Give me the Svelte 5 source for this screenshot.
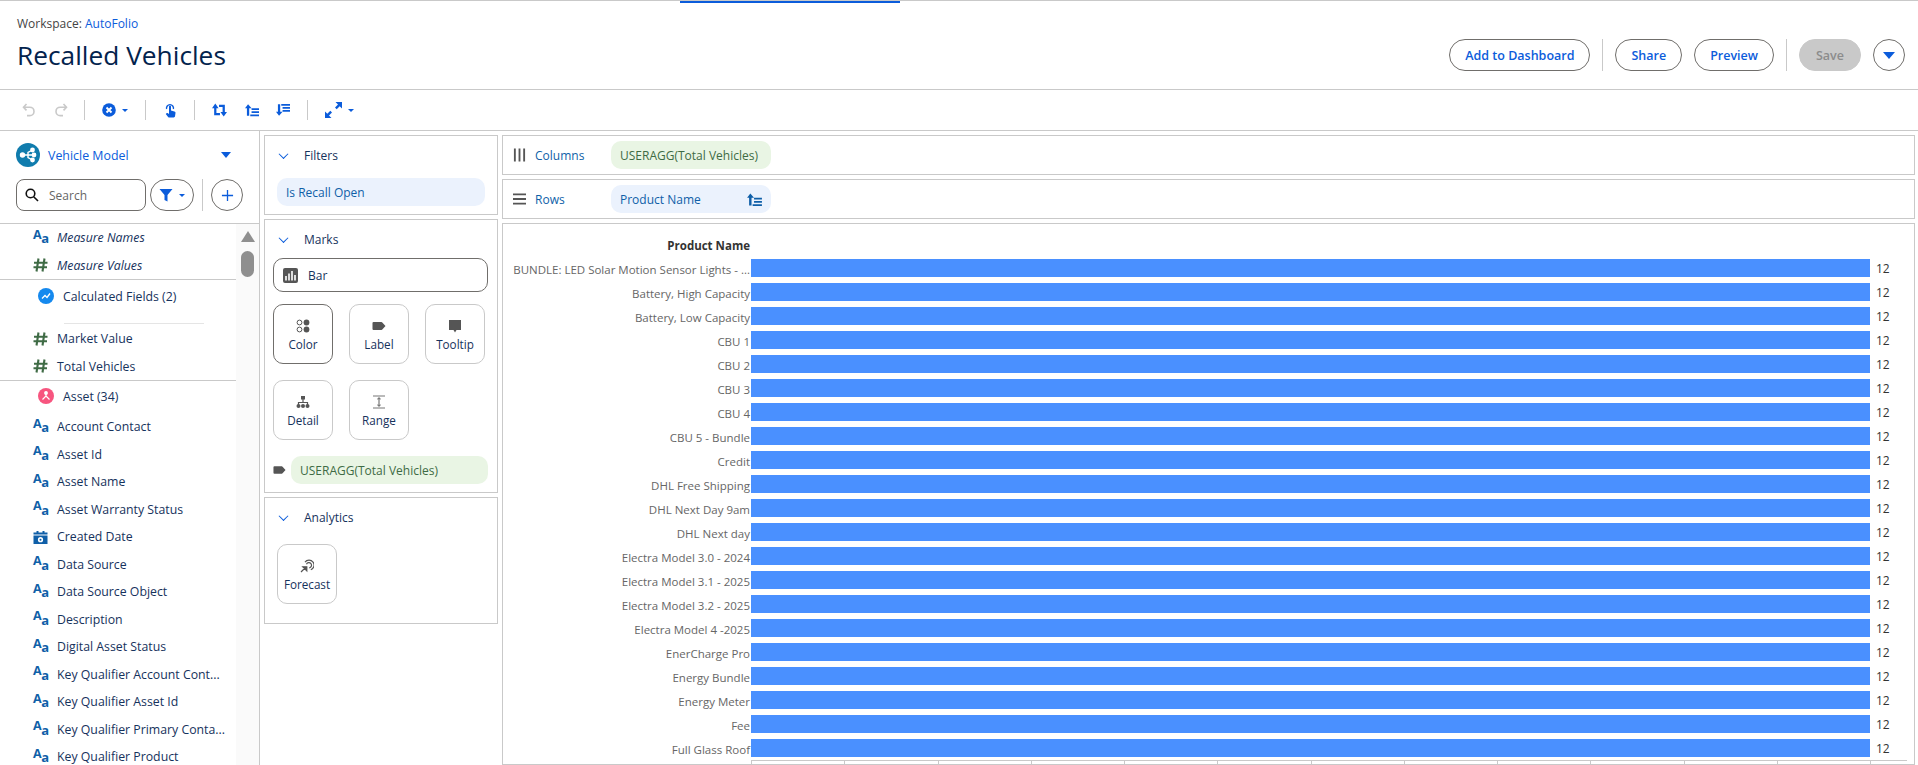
<script lang="ts">
  const fields = [
    ["Account Contact", "text"],
    ["Asset Id", "text"],
    ["Asset Name", "text"],
    ["Asset Warranty Status", "text"],
    ["Created Date", "date"],
    ["Data Source", "text"],
    ["Data Source Object", "text"],
    ["Description", "text"],
    ["Digital Asset Status", "text"],
    ["Key Qualifier Account Cont...", "text"],
    ["Key Qualifier Asset Id", "text"],
    ["Key Qualifier Primary Conta...", "text"],
    ["Key Qualifier Product", "text"],
  ];

  const products = [
    "BUNDLE: LED Solar Motion Sensor Lights - ...",
    "Battery, High Capacity",
    "Battery, Low Capacity",
    "CBU 1",
    "CBU 2",
    "CBU 3",
    "CBU 4",
    "CBU 5 - Bundle",
    "Credit",
    "DHL Free Shipping",
    "DHL Next Day 9am",
    "DHL Next day",
    "Electra Model 3.0 - 2024",
    "Electra Model 3.1 - 2025",
    "Electra Model 3.2 - 2025",
    "Electra Model 4 -2025",
    "EnerCharge Pro",
    "Energy Bundle",
    "Energy Meter",
    "Fee",
    "Full Glass Roof",
  ];

  const ticks = Array.from({ length: 13 });
</script>

{#snippet textIcon()}
  <span class="aa"><b>A</b><i>a</i></span>
{/snippet}

{#snippet numIcon()}
  <svg class="ficon" viewBox="0 0 15 14" fill="none" stroke="#3f6b45" stroke-width="2.100">
    <path d="M5.500 .5 3.500 13.500M11.500 .5 9.500 13.500M1 4.700h13.500M.5 9.300H14" />
  </svg>
{/snippet}

{#snippet dateIcon()}
  <svg class="ficon" viewBox="0 0 15 14">
    <path fill="#0f5fa8" d="M.5 2.500h3V1h2v1.500h4V1h2v1.500h3v2H.5zM.5 5.500h14V14H.5z" />
    <circle cx="7.500" cy="9.700" r="2.600" fill="#fff" />
    <circle cx="7.500" cy="9.700" r="1" fill="#0f5fa8" />
  </svg>
{/snippet}

{#snippet sortAsc()}
  <svg class="sort" viewBox="0 0 16 14" fill="currentColor">
    <path d="M3.500 .5 7.500 5H4.800v8.500H2.200V5H0zM7.500 5H16v2H7.500zM7.500 8.500H16v2H7.500zM6 12H16v2H6z" />
  </svg>
{/snippet}

<div class="page">
  <div class="progress"></div>

  <header class="top">
    <div>
      <div class="crumb">Workspace: <span class="link">AutoFolio</span></div>
      <h1>Recalled Vehicles</h1>
    </div>
    <div class="actions">
      <button class="pill">Add to Dashboard</button>
      <span class="vsep"></span>
      <button class="pill">Share</button>
      <button class="pill">Preview</button>
      <span class="vsep"></span>
      <button class="pill save">Save</button>
      <button class="round" aria-label="More"><span class="tri"></span></button>
    </div>
  </header>

  <div class="toolbar">
    <svg class="tb grey" viewBox="0 0 14 14" fill="none" stroke="currentColor" stroke-width="1.600"><path d="M4.500 1 1.500 4.200 4.500 7.400M1.500 4.200h6.300a4.200 4.200 0 0 1 0 8.400H5" /></svg>
    <svg class="tb grey gap2" viewBox="0 0 14 14" fill="none" stroke="currentColor" stroke-width="1.600"><path d="M9.500 1l3 3.200-3 3.200M12.500 4.200H6.200a4.200 4.200 0 0 0 0 8.400H9" /></svg>
    <span class="tsep first"></span>
    <svg class="tb big" viewBox="0 0 14 14"><circle cx="7" cy="7" r="6.800" fill="currentColor" /><path d="M4.500 4.500l5 5M9.500 4.500l-5 5" stroke="#fff" stroke-width="1.900" /></svg>
    <span class="caret"></span>
    <span class="tsep"></span>
    <svg class="tb big touch" viewBox="0 0 14 16" fill="currentColor"><path d="M6 4a1 1 0 0 1 2 0v4l3.400.9c.8.2 1.200.8 1.100 1.600l-.5 3.300c-.1.700-.6 1.200-1.300 1.200H6.300c-.5 0-.9-.2-1.200-.6L2.800 11.500l.7-.8c.4-.3 1-.3 1.400 0L6 11.500z" /><path d="M3.600 6.500a3.500 3.500 0 1 1 6.800 0" fill="none" stroke="currentColor" stroke-width="1.400" /></svg>
    <span class="tsep"></span>
    <svg class="tb repeat" viewBox="0 0 16 14" fill="currentColor"><path d="M0 5 3.500 0 7 5H4.700v5.300H8.500V12.500H2.300V5zM16 9l-3.500 5L9 9h2.300V3.700H7.500V1.500h6.200V9z" /></svg>
    <svg class="tb wide mid" viewBox="0 0 16 14" fill="currentColor"><path d="M3.500 .5 7.500 5H4.800v8.500H2.200V5H0zM7.500 5H16v2H7.500zM7.500 8.500H16v2H7.500zM6 12H16v2H6z" /></svg>
    <svg class="tb wide mid" viewBox="0 0 16 14" fill="currentColor"><path d="M3.500 13.500 0 9h2.200V.5h2.600V9h2.700zM6 0H16v2H6zM7.500 3.500H16v2H7.500zM7.500 7H16v2H7.500z" /></svg>
    <span class="tsep"></span>
    <svg class="tb big expand" viewBox="0 0 17 16" fill="currentColor"><path d="M0 16V9.500l2.300 2.300 3-3L7 10.500l-3 3L6.500 16zM17 0v6.500l-2.300-2.300-3 3L10 5.500l3-3L10.500 0z" /></svg>
    <span class="caret"></span>
  </div>

  <div class="main">
    <aside class="data">
      <div class="model">
        <span class="model-logo">
          <svg viewBox="0 0 24 24" fill="none" stroke="#fff" stroke-width="1.400"><path d="M6 12h6M16.500 7 12 9.500v5l4.500 2.500M12 12h5" /><circle cx="6.500" cy="12" r="2" fill="#fff" /><circle cx="16.500" cy="7" r="1.700" fill="#fff" /><circle cx="18" cy="12" r="1.700" fill="#fff" /><circle cx="16.500" cy="17" r="1.700" fill="#fff" /></svg>
        </span>
        <span class="model-name">Vehicle Model</span>
        <span class="tri model-tri"></span>
      </div>
      <div class="search-row">
        <div class="search">
          <svg viewBox="0 0 14 14" fill="none" stroke="#111" stroke-width="1.600"><circle cx="5.500" cy="5.500" r="4.300" /><path d="m8.700 8.700 4.300 4.300" /></svg>
          <span>Search</span>
        </div>
        <button class="filter" aria-label="Filter">
          <svg viewBox="0 0 14 14" fill="#0b5cdb"><path d="M.5 1h13L8.500 7v6.500l-3-1.500V7z" /></svg>
          <span class="caret"></span>
        </button>
        <span class="vsep short"></span>
        <button class="plus" aria-label="Add">
          <svg viewBox="0 0 14 14" stroke="#0b5cdb" stroke-width="1.400"><path d="M7 1v12M1 7h12" /></svg>
        </button>
      </div>

      <div class="list-wrap">
        <div class="list">
          <div class="field"><span class="fi">{@render textIcon()}</span><em>Measure Names</em></div>
          <div class="field"><span class="fi">{@render numIcon()}</span><em>Measure Values</em></div>
          <div class="group bordered">
            <span class="badge calc"><svg viewBox="0 0 12 12" fill="none" stroke="#fff" stroke-width="1.300"><path d="M2 8.500 5 5.500l2 2L10 3.500" /></svg></span>
            Calculated Fields (2)
          </div>
          <div class="inner-sep"></div>
          <div class="field"><span class="fi">{@render numIcon()}</span>Market Value</div>
          <div class="field"><span class="fi">{@render numIcon()}</span>Total Vehicles</div>
          <div class="group bordered short-group">
            <span class="badge asset"><svg viewBox="0 0 12 12" fill="none" stroke="#fff" stroke-width="1.200"><path d="M6 2v4L2.500 9.500M6 6l3.500 3.500" /><circle cx="6" cy="3" r="1.300" fill="#fff" /></svg></span>
            Asset (34)
          </div>
          {#each fields as [name, kind]}
            <div class="field">
              <span class="fi">
                {#if kind === "date"}{@render dateIcon()}{:else}{@render textIcon()}{/if}
              </span>
              {name}
            </div>
          {/each}
        </div>
        <div class="gutter">
          <span class="up"></span>
          <span class="thumb"></span>
        </div>
      </div>
    </aside>

    <section class="shelves">
      <div class="panel filters">
        <div class="panel-head"><span class="chev"></span>Filters</div>
        <div class="chip blue">Is Recall Open</div>
      </div>

      <div class="panel marks">
        <div class="panel-head"><span class="chev"></span>Marks</div>
        <div class="mark-select">
          <span class="bar-ico">
            <svg viewBox="0 0 15 15"><rect width="15" height="15" rx="2" fill="#555" /><path d="M3 8v4.500M6 5.500v7M9 3v9.500M12 7v5.500" stroke="#fff" stroke-width="1.600" /></svg>
          </span>
          Bar
        </div>
        <div class="cards">
          <div class="card active">
            <svg viewBox="0 0 14 14"><circle cx="3.500" cy="3.500" r="2.400" fill="none" stroke="#555" /><circle cx="10.500" cy="3.500" r="2.900" fill="#555" /><circle cx="3.500" cy="10.500" r="2.400" fill="none" stroke="#555" /><circle cx="10.500" cy="10.500" r="2.900" fill="#555" /></svg>
            Color
          </div>
          <div class="card">
            <svg viewBox="0 0 14 14" fill="#555"><path d="M1.500 3h8a1 1 0 0 1 .8.400l3.200 3.600-3.200 3.600a1 1 0 0 1-.8.400h-8a1 1 0 0 1-1-1V4a1 1 0 0 1 1-1z" /></svg>
            Label
          </div>
          <div class="card">
            <svg viewBox="0 0 14 14" fill="#555"><path d="M1 1h12v10H8.500L7 13.500 5.500 11H1z" /></svg>
            Tooltip
          </div>
          <div class="card">
            <svg viewBox="0 0 14 14" fill="#555" stroke="#555"><rect x="5" y="1" width="4" height="3.500" stroke="none" /><path d="M7 4v3M2.500 10V7.500h9V10" fill="none" stroke-width="1.200" /><circle cx="2.500" cy="11" r="2" stroke="none" /><circle cx="7" cy="11" r="2" stroke="none" /><circle cx="11.500" cy="11" r="2" stroke="none" /></svg>
            Detail
          </div>
          <div class="card">
            <svg viewBox="0 0 14 14" fill="none" stroke="#777" stroke-width="1.200"><path d="M1 1h12M1 13h12M7 3v8" /><path d="M5.500 4.300 7 2.800l1.500 1.500M5.500 9.700 7 11.200l1.500-1.500" /></svg>
            Range
          </div>
        </div>
        <div class="used">
          <svg viewBox="0 0 14 14" fill="#555"><path d="M1.500 3h8a1 1 0 0 1 .8.400l3.200 3.600-3.200 3.600a1 1 0 0 1-.8.400h-8a1 1 0 0 1-1-1V4a1 1 0 0 1 1-1z" /></svg>
          <div class="chip green">USERAGG(Total Vehicles)</div>
        </div>
      </div>

      <div class="panel analytics">
        <div class="panel-head"><span class="chev"></span>Analytics</div>
        <div class="card">
          <svg viewBox="0 0 14 14" fill="none" stroke="#555" stroke-width="1.200"><path d="M5 3.200a5 5 0 1 1 5.800 7.600M6.500 5.200a2.600 2.600 0 1 1 2.800 3.600" /><path d="M1 13l5-5M2.800 7.800h4v4z" fill="#555" /></svg>
          Forecast
        </div>
      </div>
    </section>

    <section class="viz">
      <div class="panel shelf">
        <span class="shelf-label">
          <svg viewBox="0 0 14 14" fill="#555"><path d="M1 0h2v14H1zM6 0h2v14H6zM11 0h2v14h-2z" /></svg>
          Columns
        </span>
        <div class="chip green pill-chip">USERAGG(Total Vehicles)</div>
      </div>
      <div class="panel shelf">
        <span class="shelf-label">
          <svg viewBox="0 0 14 14" fill="#555"><path d="M0 1h14v2H0zM0 6h14v2H0zM0 11h14v2H0z" /></svg>
          Rows
        </span>
        <div class="chip blue pill-chip">Product Name {@render sortAsc()}</div>
      </div>
      <div class="panel chart">
        <div class="axis-title">Product Name</div>
        <div class="plot">
          {#each products as p}
            <div class="row">
              <span class="label">{p}</span>
              <span class="bar"></span>
              <span class="val">12</span>
            </div>
          {/each}
        </div>
        <div class="axis">
          {#each ticks as _}<span class="tick"></span>{/each}
        </div>
      </div>
    </section>
  </div>
</div>

<style>
  :global(body) {
    margin: 0;
    background: #fff;
    overflow: hidden;
  }
  .page {
    width: 1918px;
    height: 765px;
    overflow: hidden;
    position: relative;
    font-family: "Open Sans", "Noto Sans", sans-serif;
    font-size: 12px;
    color: #16325c;
    border-top: 1px solid #c9c9c9;
    box-sizing: border-box;
  }
  .progress {
    position: absolute;
    left: 680px;
    top: -1px;
    width: 220px;
    height: 3px;
    background: #0b5cdb;
  }
  button {
    font-family: inherit;
    cursor: pointer;
    background: #fff;
  }

  .top {
    height: 89px;
    box-sizing: border-box;
    border-bottom: 1px solid #c9c9c9;
    display: flex;
    justify-content: space-between;
    padding: 15px 13px 0 17px;
  }
  .crumb {
    color: #444;
    line-height: 16px;
  }
  .link {
    color: #0b5cdb;
  }
  h1 {
    margin: 6px 0 0;
    font-size: 26.300px;
    font-weight: 400;
    line-height: 34px;
    color: #03234d;
  }
  .actions {
    display: flex;
    align-items: center;
    gap: 12px;
    height: 32px;
    margin-top: 23px;
  }
  .pill {
    height: 32px;
    border: 1px solid #706e6b;
    border-radius: 16px;
    color: #0b5cdb;
    font-size: 12.500px;
    font-weight: 600;
    padding: 0 15px;
  }
  .pill.save {
    background: #c9c9c9;
    color: #8c8c8c;
    border-color: #c9c9c9;
    padding: 0 16px;
  }
  .round {
    width: 32px;
    height: 32px;
    border: 1px solid #706e6b;
    border-radius: 50%;
    display: flex;
    align-items: center;
    justify-content: center;
    padding: 0;
  }
  .tri {
    display: block;
    width: 0;
    height: 0;
    border-left: 6px solid transparent;
    border-right: 6px solid transparent;
    border-top: 7px solid #0b5cdb;
  }
  .vsep {
    width: 1px;
    height: 32px;
    background: #c9c9c9;
  }

  .toolbar {
    height: 41px;
    box-sizing: border-box;
    border-bottom: 1px solid #c9c9c9;
    display: flex;
    align-items: center;
    padding-left: 22px;
    color: #0b5cdb;
  }
  .tb {
    width: 14px;
    height: 14px;
  }
  .tb.grey {
    color: #c9c9c9;
  }
  .tb.gap2 {
    margin-left: 18px;
  }
  .tsep {
    width: 1px;
    height: 20px;
    background: #c9c9c9;
    margin: 0 17px;
  }
  .tsep.first {
    margin-left: 16px;
  }
  .tb.touch {
    height: 17px;
  }
  .tb.repeat {
    width: 15px;
    height: 14px;
  }
  .tb.wide {
    width: 14px;
  }
  .tb.expand {
    width: 17px;
    height: 16px;
  }
  .tb.mid {
    margin-left: 17.500px;
  }
  .caret {
    width: 0;
    height: 0;
    border-left: 3px solid transparent;
    border-right: 3px solid transparent;
    border-top: 3px solid #0b5cdb;
    margin-left: 6px;
  }

  .main {
    display: flex;
    height: 634px;
  }
  .data {
    width: 260px;
    flex: none;
    box-sizing: border-box;
    border-right: 1px solid #c9c9c9;
    display: flex;
    flex-direction: column;
  }
  .model {
    display: flex;
    align-items: center;
    padding: 12px 0 0 16px;
    height: 24px;
  }
  .model-logo {
    width: 24px;
    height: 24px;
    border-radius: 50%;
    background: #107cad;
    display: flex;
  }
  .model-name {
    color: #0b5cdb;
    margin-left: 8px;
    width: 173px;
    font-size: 12.400px;
  }
  .model-tri {
    border-left-width: 5px;
    border-right-width: 5px;
    border-top-width: 6px;
  }
  .search-row {
    display: flex;
    align-items: center;
    padding: 12px 0 0 16px;
    height: 32px;
    box-sizing: content-box;
  }
  .search {
    width: 130px;
    height: 32px;
    box-sizing: border-box;
    border: 1px solid #706e6b;
    border-radius: 8px;
    display: flex;
    align-items: center;
    padding-left: 8px;
    color: #666;
    gap: 10px;
  }
  .search svg {
    width: 14px;
    height: 14px;
  }
  .filter {
    width: 44px;
    height: 32px;
    border: 1px solid #706e6b;
    border-radius: 16px;
    margin-left: 4px;
    display: flex;
    align-items: center;
    justify-content: center;
    padding: 0;
  }
  .filter svg {
    width: 14px;
    height: 14px;
  }
  .vsep.short {
    margin: 0 8px;
  }
  .plus {
    width: 32px;
    height: 32px;
    border: 1px solid #706e6b;
    border-radius: 50%;
    padding: 0;
    display: flex;
    align-items: center;
    justify-content: center;
  }
  .plus svg {
    width: 13px;
    height: 13px;
  }
  .list-wrap {
    margin-top: 12px;
    border-top: 1px solid #c9c9c9;
    display: flex;
    flex: 1;
    min-height: 0;
  }
  .list {
    width: 236px;
    flex: none;
    font-size: 12.300px;
  }
  .field {
    height: 27.500px;
    display: flex;
    align-items: center;
    color: #16325c;
    white-space: nowrap;
  }
  .fi {
    width: 57px;
    padding-left: 33px;
    box-sizing: border-box;
    flex: none;
    display: flex;
  }
  .aa {
    color: #0f5fa8;
    display: inline-flex;
    align-items: flex-end;
    height: 15px;
    line-height: 1;
  }
  .aa b {
    font-size: 12.500px;
    font-weight: 700;
    margin-bottom: 4px;
  }
  .aa i {
    font-size: 13px;
    font-style: normal;
    font-weight: 700;
    margin-left: -.5px;
  }
  .ficon {
    width: 15px;
    height: 14px;
  }
  .group {
    display: flex;
    align-items: center;
    height: 34px;
    padding-left: 38px;
    padding-bottom: 1px;
    gap: 9px;
    border-top: 1px solid #c9c9c9;
    box-sizing: border-box;
  }
  .short-group {
    height: 33px;
    padding-bottom: 2px;
  }
  .badge {
    width: 16px;
    height: 16px;
    border-radius: 50%;
    display: flex;
    align-items: center;
    justify-content: center;
  }
  .badge svg {
    width: 12px;
    height: 12px;
  }
  .calc {
    background: #1589ee;
  }
  .asset {
    background: #f7557f;
  }
  .inner-sep {
    height: 1px;
    background: #e5e5e5;
    margin: 10px 32px 1px 64px;
  }
  .gutter {
    width: 23px;
    background: #fafafa;
    display: flex;
    flex-direction: column;
    align-items: center;
    padding-top: 7px;
  }
  .up {
    width: 0;
    height: 0;
    border-left: 7px solid transparent;
    border-right: 7px solid transparent;
    border-bottom: 11px solid #8f8f8f;
  }
  .thumb {
    width: 13px;
    height: 26px;
    background: #8f8f8f;
    border-radius: 7px;
    margin-top: 9px;
  }

  .shelves {
    width: 234px;
    flex: none;
    margin-left: 4px;
    padding-top: 4px;
    display: flex;
    flex-direction: column;
    gap: 4px;
  }
  .panel {
    border: 1px solid #c9c9c9;
    box-sizing: border-box;
  }
  .panel-head {
    display: flex;
    align-items: center;
    height: 40px;
    gap: 17px;
    color: #16325c;
  }
  .chev {
    width: 6px;
    height: 6px;
    border-right: 1.500px solid #0b5cdb;
    border-bottom: 1.500px solid #0b5cdb;
    transform: rotate(45deg) translate(-1px, -1px);
    margin-left: 2px;
  }
  .chip {
    border-radius: 10px;
    height: 28px;
    display: flex;
    align-items: center;
    padding-left: 9px;
    box-sizing: border-box;
  }
  .chip.blue {
    background: #ebf2fd;
    color: #0f5fa8;
  }
  .chip.green {
    background: #e9f5e4;
    color: #3e6b44;
  }
  .filters {
    height: 80px;
    padding: 0 12px;
  }
  .filters .panel-head {
    height: 42px;
    box-sizing: border-box;
    padding: 0 0 3px 1px;
  }
  .marks {
    height: 274px;
    padding: 0 9px 0 8px;
  }
  .marks .panel-head {
    height: 38px;
    padding-left: 5px;
  }
  .mark-select {
    height: 34px;
    box-sizing: border-box;
    border: 1px solid #706e6b;
    border-radius: 10px;
    display: flex;
    align-items: center;
    gap: 10px;
    padding-left: 9px;
  }
  .bar-ico svg {
    display: block;
    width: 15px;
    height: 15px;
  }
  .cards {
    display: grid;
    grid-template-columns: repeat(3, 60px);
    gap: 16px 16px;
    margin-top: 12px;
  }
  .card {
    width: 60px;
    height: 60px;
    box-sizing: border-box;
    border: 1px solid #c9c9c9;
    border-radius: 10px;
    display: flex;
    flex-direction: column;
    align-items: center;
    justify-content: center;
    gap: 3px;
    padding-top: 2px;
    font-size: 11.700px;
    color: #16325c;
  }
  .card svg {
    width: 14px;
    height: 14px;
  }
  .card.active {
    border-color: #706e6b;
  }
  .used {
    display: flex;
    align-items: center;
    gap: 5px;
    margin-top: 16px;
  }
  .used svg {
    width: 13px;
    height: 14px;
    flex: none;
  }
  .used .chip {
    width: 198px;
  }
  .analytics {
    height: 127px;
    padding: 0 12px;
  }
  .analytics .panel-head {
    height: 38px;
    padding-left: 1px;
    margin-bottom: 8px;
  }

  .viz {
    flex: 1;
    margin-left: 4px;
    margin-right: 3px;
    padding-top: 4px;
    display: flex;
    flex-direction: column;
    gap: 4px;
    min-width: 0;
  }
  .shelf {
    height: 40px;
    display: flex;
    align-items: center;
    flex: none;
    padding-left: 10px;
  }
  .shelf-label {
    width: 98px;
    display: flex;
    align-items: center;
    gap: 9px;
    color: #0f5fa8;
  }
  .shelf-label svg {
    width: 13px;
    height: 14px;
  }
  .pill-chip {
    width: 160px;
    justify-content: space-between;
    padding-right: 9px;
  }
  .sort {
    width: 15px;
    height: 13px;
    color: #0f5fa8;
  }
  .chart {
    flex: 1;
    min-height: 0;
    overflow: hidden;
    padding-top: 14px;
  }
  .axis-title {
    width: 247px;
    text-align: right;
    font-weight: 700;
    color: #333;
    line-height: 16px;
    font-size: 11.500px;
  }
  .plot {
    margin-top: 2px;
  }
  .row {
    display: flex;
    align-items: center;
    height: 24px;
  }
  .label {
    width: 248px;
    flex: none;
    text-align: right;
    color: #666;
    font-size: 11.500px;
    white-space: nowrap;
    padding: 2px 0 0 0;
    box-sizing: border-box;
    border-right: 1px solid transparent;
  }
  .bar {
    width: 1119px;
    height: 18px;
    background: #4a90ff;
    flex: none;
  }
  .val {
    margin-left: 6px;
    color: #333;
  }
  .axis {
    margin-left: 248px;
    width: 1156px;
    border-top: 1px solid #c9c9c9;
    display: flex;
  }
  .tick {
    width: 1px;
    height: 5px;
    background: #c9c9c9;
    flex: none;
    margin-right: 92.250px;
  }
</style>
